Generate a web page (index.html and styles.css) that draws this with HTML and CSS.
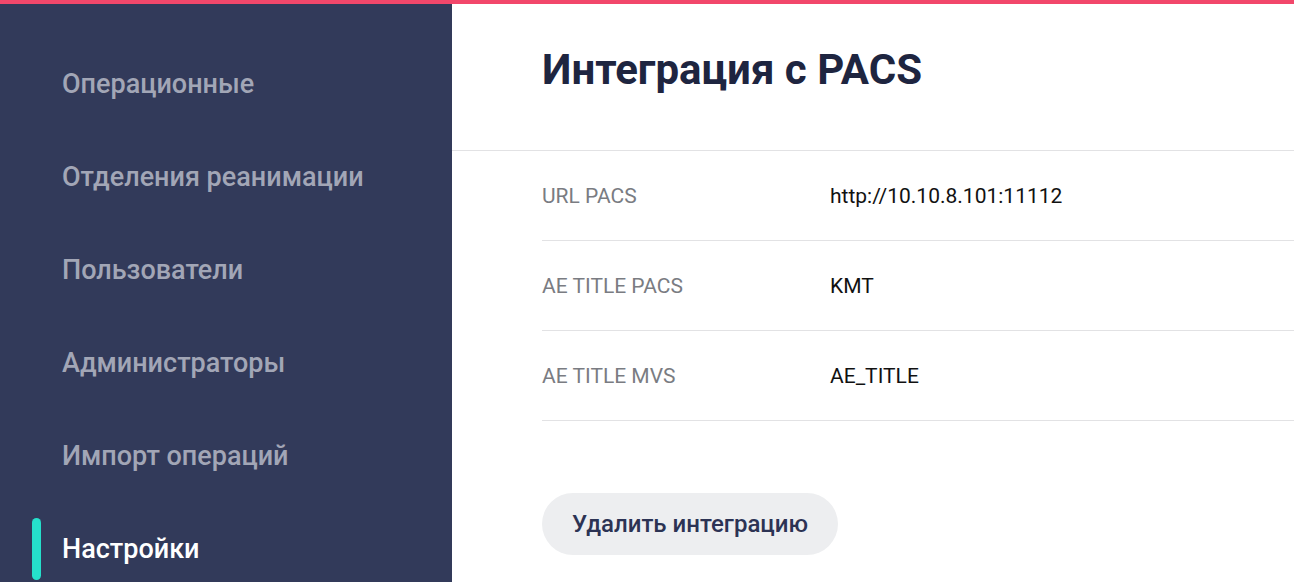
FILE: index.html
```html
<!DOCTYPE html>
<html lang="ru">
<head>
<meta charset="utf-8">
<title>Интеграция с PACS</title>
<link rel="stylesheet" href="styles.css">
</head>
<body>
<div class="topbar"></div>
<div class="layout">
  <nav class="sidebar">
    <a class="nav-item"><span class="marker"></span><span class="label">Операционные</span></a>
    <a class="nav-item"><span class="marker"></span><span class="label">Отделения реанимации</span></a>
    <a class="nav-item"><span class="marker"></span><span class="label">Пользователи</span></a>
    <a class="nav-item"><span class="marker"></span><span class="label">Администраторы</span></a>
    <a class="nav-item"><span class="marker"></span><span class="label">Импорт операций</span></a>
    <a class="nav-item active"><span class="marker"></span><span class="label">Настройки</span></a>
  </nav>
  <main class="main">
    <header class="header">
      <h1 class="title">Интеграция с PACS</h1>
    </header>
    <section class="content">
      <div class="row"><div class="key">URL PACS</div><div class="value">http://10.10.8.101:11112</div></div>
      <div class="row"><div class="key">AE TITLE PACS</div><div class="value">KMT</div></div>
      <div class="row"><div class="key">AE TITLE MVS</div><div class="value">AE_TITLE</div></div>
      <button class="btn">Удалить интеграцию</button>
    </section>
  </main>
</div>
</body>
</html>
```

FILE: styles.css
```css
html, body {
  margin: 0;
  padding: 0;
  height: 100%;
  overflow: hidden;
}
body {
  font-family: Roboto, "Liberation Sans", sans-serif;
  background: #ffffff;
}
.topbar {
  height: 4px;
  background: #f2476b;
}
.layout {
  display: flex;
  height: calc(100% - 4px);
}
.sidebar {
  width: 452px;
  flex: 0 0 452px;
  background: #323a5a;
  padding-top: 33px;
  box-sizing: border-box;
  display: flex;
  flex-direction: column;
  overflow: hidden;
}
.nav-item {
  display: flex;
  align-items: center;
  gap: 21px;
  height: 93px;
  flex: 0 0 93px;
  padding-left: 32px;
  font-size: 27px;
  font-weight: 500;
  color: #a2a6b6;
  text-decoration: none;
}
.marker {
  width: 9px;
  height: 62px;
  border-radius: 5px;
  flex: 0 0 9px;
}
.nav-item.active {
  color: #ffffff;
}
.nav-item.active .marker {
  background: #25e0cb;
}
.main {
  flex: 1;
  display: flex;
  flex-direction: column;
}
.header {
  box-sizing: border-box;
  height: 147px;
  padding: 42px 0 0 90px;
  border-bottom: 1px solid #e2e2e4;
}
.title {
  margin: 0;
  font-size: 42px;
  line-height: 48px;
  font-weight: 700;
  color: #1e2540;
}
.content {
  padding-left: 90px;
}
.row {
  display: flex;
  align-items: center;
  height: 90px;
  box-sizing: border-box;
  border-bottom: 1px solid #e2e2e4;
  font-size: 21px;
}
.key {
  width: 288px;
  flex: 0 0 288px;
  color: #7a7c82;
}
.value {
  color: #111111;
}
.btn {
  margin-top: 72px;
  height: 62px;
  padding: 0 30px;
  border: none;
  border-radius: 31px;
  background: #edeef0;
  font-family: Roboto, "Liberation Sans", sans-serif;
  font-size: 24px;
  font-weight: 500;
  color: #2c3354;
}
```
